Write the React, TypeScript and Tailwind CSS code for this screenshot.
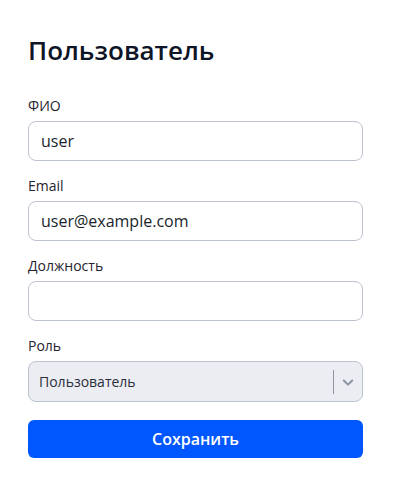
import React from 'react';

function Field({ label, value }: { label: string; value: string }) {
  return (
    <div className="flex flex-col">
      <label className="text-[14px] leading-5 text-[#1f2430] mb-[5px]">{label}</label>
      <input
        readOnly
        value={value}
        className="h-10 w-full rounded-lg border border-[#bcc3cf] bg-white px-3 text-[16px] text-[#1a1f2b] outline-none"
      />
    </div>
  );
}

export default function App() {
  return (
    <div
      className="w-[403px] h-[504px] bg-white px-7 pt-[34px]"
      style={{ fontFamily: '"Open Sans", "Noto Sans", sans-serif' }}
    >
      <h1 className="text-[26px] leading-8 font-semibold text-[#0d1526] mb-[30px]">Пользователь</h1>

      <div className="flex w-[335px] flex-col gap-[15px]">
        <Field label="ФИО" value="user" />
        <Field label="Email" value="user@example.com" />
        <Field label="Должность" value="" />

        <div className="flex flex-col">
          <label className="text-[14px] leading-5 text-[#1f2430] mb-[5px]">Роль</label>
          <div className="flex h-[41px] items-center rounded-lg border border-[#bcc3cf] bg-[#ebedf2]">
            <span className="flex-1 pl-[10px] text-[14px] text-[#2a2f3a]">Пользователь</span>
            <span className="h-6 w-px bg-[#8d95a3]" />
            <span className="flex w-[28px] items-center justify-center">
              <svg width="18" height="18" viewBox="0 0 20 20" fill="#8d95a3">
                <path d="M4.516 7.548c0.436-0.446 1.043-0.481 1.576 0l3.908 3.747 3.908-3.747c0.533-0.481 1.141-0.446 1.574 0 0.436 0.445 0.408 1.197 0 1.615-0.406 0.418-4.695 4.502-4.695 4.502-0.217 0.223-0.502 0.335-0.787 0.335s-0.57-0.112-0.789-0.335c0 0-4.287-4.084-4.695-4.502s-0.436-1.17 0-1.615z" />
              </svg>
            </span>
          </div>
        </div>

        <button className="mt-[3px] h-[38px] w-full rounded-md bg-[#0057ff] text-[16px] font-semibold text-white">
          Сохранить
        </button>
      </div>
    </div>
  );
}
